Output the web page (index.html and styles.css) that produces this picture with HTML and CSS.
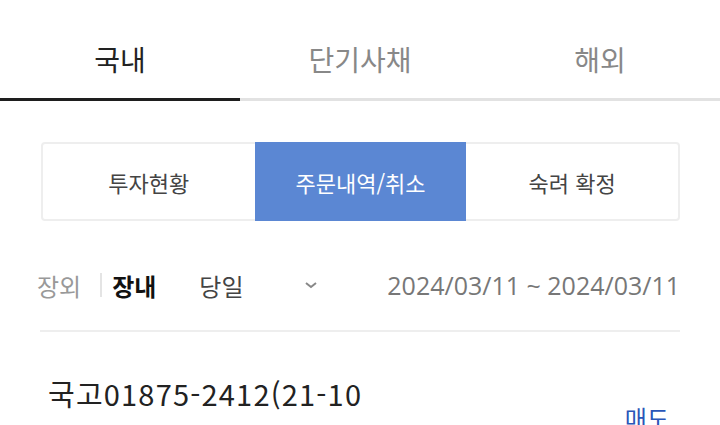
FILE: index.html
```html
<!DOCTYPE html>
<html lang="ko">
<head>
    <meta charset="UTF-8">
    <title>주문내역</title>
    <link rel="stylesheet" href="styles.css">
</head>
<body>

<div class="tabs">
    <div class="tab active">국내</div>
    <div class="tab">단기사채</div>
    <div class="tab">해외</div>
</div>

<div class="segment">
    <div class="seg">투자현황</div>
    <div class="seg on">주문내역/취소</div>
    <div class="seg">숙려 확정</div>
</div>

<div class="filter">
    <span class="market">장외</span>
    <span class="bar"></span>
    <span class="market sel">장내</span>
    <span class="period">당일</span>
    <svg class="chev" width="14" height="10" viewBox="0 0 14 10">
        <path d="M2 3 L7 7 L12 3" fill="none" stroke="#888" stroke-width="2"/>
    </svg>
    <span class="dates">2024/03/11 ~ 2024/03/11</span>
</div>

<div class="item">
    <div class="name">국고01875-2412(21-10</div>
    <div class="side">매도</div>
</div>

</body>
</html>
```

FILE: styles.css
```css
body {
    margin: 0;
    font-family: "Noto Sans CJK KR", "Noto Sans", sans-serif;
    background: #fff;
    overflow: hidden;
}
.tabs {
    display: flex;
}
.tab {
    flex: 1;
    height: 98px;
    line-height: 118px;
    text-align: center;
    font-size: 28px;
    color: #888;
    border-bottom: 3px solid #e2e2e2;
}
.tab.active {
    color: #222;
    border-bottom-color: #1e1e1e;
}
.segment {
    display: flex;
    margin: 41px 40px 0 41px;
    height: 75px;
    border: 2px solid #eee;
    border-radius: 4px;
}
.seg {
    flex: 1;
    display: flex;
    align-items: center;
    justify-content: center;
    font-size: 22px;
    color: #444;
}
.seg.on {
    background: #5b87d3;
    color: #fff;
    margin: -2px 0;
}
.filter {
    display: flex;
    align-items: center;
    height: 60px;
    margin: 34px 40px 0 37px;
    font-size: 24px;
}
.market {
    color: #999;
}
.market.sel {
    color: #111;
    font-weight: bold;
}
.bar {
    width: 2px;
    height: 24px;
    background: #e4e4e4;
    margin: 0 10px 0 19px;
}
.period {
    color: #444;
    margin-left: 43px;
}
.chev {
    margin-left: 60px;
}
.dates {
    margin-left: auto;
    font-family: "Open Sans", "Noto Sans", sans-serif;
    font-size: 25px;
    color: #777;
}
.item {
    margin: 15px 40px 0 40px;
    border-top: 2px solid #eee;
    display: flex;
    justify-content: space-between;
    padding: 40px 11px 0 8px;
}
.name {
    font-size: 29px;
    letter-spacing: 1.2px;
    color: #222;
}
.side {
    font-size: 24px;
    color: #2a56b8;
    margin-top: 28px;
}
```
